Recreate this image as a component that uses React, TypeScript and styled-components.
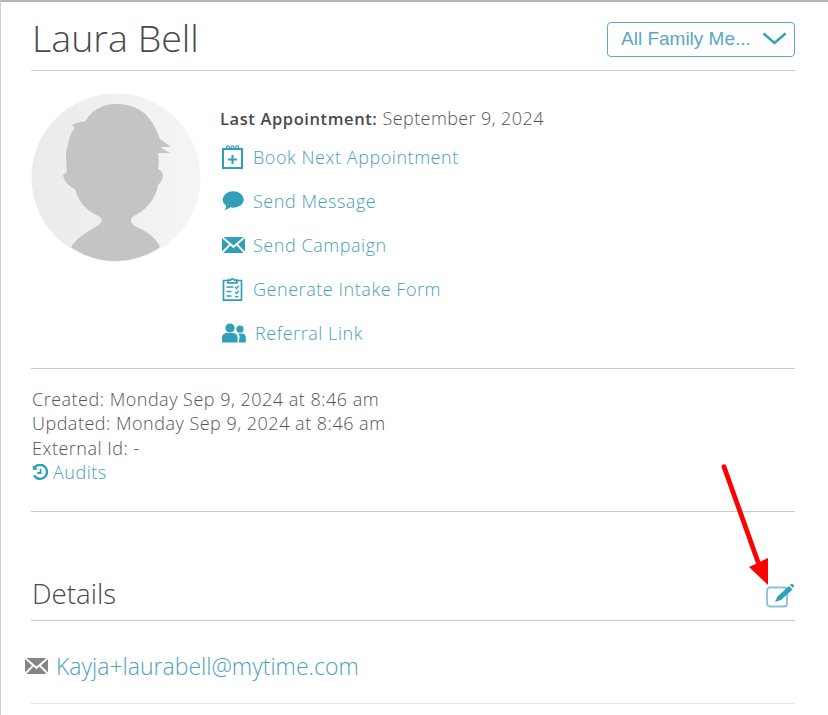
import React from "react";
import styled, { createGlobalStyle } from "styled-components";

const Global = createGlobalStyle`
  html, body { margin: 0; padding: 0; background: #fff; }
  body { font-family: "Open Sans", Lato, sans-serif; font-weight: 300; color: #555; overflow: hidden; }
  * { box-sizing: border-box; }
`;

const teal = "#2f9fba";
const linkColor = "#4ba0b7";

const Page = styled.div`
  position: relative;
  width: 828px;
  height: 715px;
  overflow: hidden;
  border-top: 2px solid #b4b4b4;
  border-left: 1px solid #cfcfcf;
  padding: 20px 33px 0 30px;
`;
const Header = styled.header`
  height: 49px;
  border-bottom: 1px solid #cccccc;
  display: flex;
  justify-content: space-between;
  align-items: flex-start;
`;
const Name = styled.h1`
  margin: -4px 0 0 1px;
  font-size: 37.6px;
  line-height: 40px;
  font-weight: 300;
  color: #4a4a4a;
`;
const Select = styled.button`
  width: 188px;
  height: 35px;
  border: 1px solid #55aec4;
  border-radius: 4px;
  background: #fff;
  display: flex;
  align-items: center;
  padding: 0 7px 2px 13px;
  justify-content: space-between;
  font-family: "Liberation Sans", Arial, sans-serif;
  font-size: 19px;
  color: #5aa8be;
`;
const Profile = styled.section`
  height: 298px;
  border-bottom: 1px solid #cccccc;
  padding-top: 22px;
  display: flex;
  gap: 19px;
`;
const Avatar = styled.svg`
  width: 170px;
  height: 169px;
  display: block;
  flex: none;
`;
const Info = styled.div`
  padding-top: 12.5px;
`;
const LastLine = styled.div`
  font-size: 18px;
  letter-spacing: 0.4px;
  line-height: 24px;
  color: #555;
  margin-bottom: 4.5px;
  b { font-weight: 600; color: #4a4a4a; font-size: 16.5px; letter-spacing: 0.6px; }
`;
const Actions = styled.ul`
  list-style: none;
  margin: 0;
  padding: 0;
`;
const Action = styled.li<{ $gap: number }>`
  height: 44px;
  display: flex;
  align-items: center;
  gap: ${(p) => p.$gap}px;
  padding-left: 2px;
  font-size: 18px;
  letter-spacing: 0.55px;
  color: ${linkColor};
  svg { flex: none; display: block; }
`;
const Meta = styled.section`
  height: 143px;
  border-bottom: 1px solid #cccccc;
  padding: 18px 0 0 1px;
  font-size: 18px;
  letter-spacing: 0.5px;
  line-height: 24.4px;
  color: #555;
`;
const Audits = styled.div`
  display: flex;
  align-items: center;
  gap: 4px;
  color: ${linkColor};
`;
const DetailsHead = styled.div`
  height: 109px;
  border-bottom: 1px solid #cccccc;
  display: flex;
  justify-content: space-between;
  align-items: flex-end;
  padding: 0 0 11px 1px;
`;
const DetailsTitle = styled.h2`
  margin: 0;
  font-size: 27.7px;
  line-height: 32px;
  font-weight: 300;
  color: #4a4a4a;
`;
const EmailRow = styled.div`
  height: 83px;
  border-bottom: 1px solid #e2e2e2;
  display: flex;
  align-items: center;
  gap: 8px;
  padding-top: 7px;
  font-size: 23px;
  color: #4aa4bb;
  svg { margin-left: -6px; }
`;
const Arrow = styled.svg`
  position: absolute;
  left: 700px;
  top: 448px;
  pointer-events: none;
`;

const Calendar = () => (
  <svg width="21" height="24" viewBox="0 0 21 24" fill="none" stroke={teal}>
    <rect x="1" y="4" width="19" height="19" strokeWidth="2" />
    <path d="M4.5 4V2.2a1.4 1.4 0 0 1 2.8 0V4M9.1 4V2.2a1.4 1.4 0 0 1 2.8 0V4M13.7 4V2.2a1.4 1.4 0 0 1 2.8 0V4" strokeWidth="1.2" />
    <path d="M10.5 10v9M6 14.5h9" strokeWidth="2" />
  </svg>
);
const Bubble = () => (
  <svg width="22" height="20" viewBox="0 0 22 20" fill={teal}>
    <ellipse cx="11.2" cy="8.5" rx="10.6" ry="8.3" />
    <path d="M4 14c.4 1.8-.4 3.6-1.6 5 2.6-.2 5-1.6 6.4-3.4z" />
  </svg>
);
const Envelope = ({ c }: { c: string }) => (
  <svg width="23" height="16" viewBox="0 0 23 16" fill={c}>
    <path d="M1.5 0h20l-10 8.6z" />
    <path d="M0 1l7 6.4L0 14.6z" />
    <path d="M23 1l-7 6.4 7 7.2z" />
    <path d="M1.4 16l7-7.4 3.1 2.6 3.1-2.6 7 7.4z" />
  </svg>
);
const Clipboard = () => (
  <svg width="21" height="24" viewBox="0 0 21 24" fill="none" stroke={teal} strokeWidth="1.7">
    <path d="M6 3.5H1.5v19.6h18V3.5H15" />
    <path d="M6 5.8V3.2h2.6a2 2 0 0 1 3.8 0H15v2.6z" />
    <path d="M4.5 10h7M4.5 14.5h5M4.5 19h5M13 10l1.6 1.5L17 8.6M13 15l1.6 1.5L17 13.6M13 19.6h3.5" strokeWidth="1.4" />
  </svg>
);
const People = () => (
  <svg width="24" height="20" viewBox="0 0 24 20" fill={teal}>
    <circle cx="8" cy="5" r="4.6" />
    <circle cx="18" cy="6.2" r="3.6" />
    <path d="M0 19v-4.5C0 11.6 2.6 10 5 10h6c2.5 0 4.6 1.8 4.6 4.5V19.5H1z" />
    <path d="M16.8 19.5H24v-5.2c0-2.2-1.6-3.9-4-3.9h-3.5c1 1.1 1.3 2.6 1.3 4.2z" transform="translate(-.2 0)" />
  </svg>
);
const History = () => (
  <svg width="17" height="17" viewBox="0 0 17 17" fill="none" stroke={teal} strokeWidth="2.4">
    <path d="M2.6 3.4A7 7 0 1 1 2 11.4" />
    <path d="M.6 1.2 1 6l5-.4z" fill={teal} stroke="none" />
    <path d="M8.6 5v4H5.4" strokeWidth="1.8" />
  </svg>
);

export default function App() {
  return (
    <>
      <Global />
      <Page>
        <Header>
          <Name>Laura Bell</Name>
          <Select>
            <span>All Family Me...</span>
            <svg width="25" height="13" viewBox="0 0 25 13" fill="none" stroke={teal} strokeWidth="2.4">
              <path d="M1.5 1.5 12.5 11 23.5 1.5" />
            </svg>
          </Select>
        </Header>
        <Profile>
          <Avatar viewBox="0 0 170 169">
            <defs>
              <linearGradient id="bg" x1="0" x2="1" y1="0" y2="0">
                <stop offset="0" stopColor="#ebebeb" />
                <stop offset="1" stopColor="#f5f5f5" />
              </linearGradient>
            </defs>
            <ellipse cx="85" cy="84.5" rx="84.5" ry="84" fill="url(#bg)" />
            <path
              fill="#c4c4c4"
              d="M40 154 C46 144 58 138 66 133 C71 130 72 128 69 124 C55 118 47 108 44 96 C38 94 33 88 32 82 L36 79 C35 70 34 60 37 52 C38 44 41 38 44 35 L41 32 C46 29 50 29 55 28 C60 17 72 11 86 11 C100 11 110 16 116 23 C122 29 126 38 129 46 L140 54 L129 54 L139 60 L127 60 C128 66 128 72 127 76 C133 78 134 86 127 92 C125 106 114 118 101 124 C99 128 100 130 104 133 C114 138 124 143 129 154 C116 163 100 168 85 168 C68 168 53 163 40 154 Z"
            />
          </Avatar>
          <Info>
            <LastLine>
              <b>Last Appointment:</b> September 9, 2024
            </LastLine>
            <Actions>
              <Action $gap={10}><Calendar />Book Next Appointment</Action>
              <Action $gap={9}><Bubble />Send Message</Action>
              <Action $gap={8}><Envelope c={teal} />Send Campaign</Action>
              <Action $gap={10}><Clipboard />Generate Intake Form</Action>
              <Action $gap={9}><People />Referral Link</Action>
            </Actions>
          </Info>
        </Profile>
        <Meta>
          <div>Created: Monday Sep 9, 2024 at 8:46 am</div>
          <div>Updated: Monday Sep 9, 2024 at 8:46 am</div>
          <div>External Id: -</div>
          <Audits><History />Audits</Audits>
        </Meta>
        <DetailsHead>
          <DetailsTitle>Details</DetailsTitle>
          <svg width="30" height="26" viewBox="0 0 30 26" fill="none">
            <rect x="2" y="4.5" width="20" height="19" rx="3" stroke="#84c4d4" strokeWidth="1.8" />
            <path d="M10 19 12.5 13.5 24 3l3.5 3.4L16 17z" fill={teal} />
            <path d="M25 2l1-1a1.2 1.2 0 0 1 1.6 0l1.2 1.2a1.2 1.2 0 0 1 0 1.6l-1 1z" fill={teal} />
          </svg>
        </DetailsHead>
        <EmailRow>
          <Envelope c="#858585" />
          <span>Kayja+laurabell@mytime.com</span>
        </EmailRow>
        <Arrow width="80" height="150" viewBox="0 0 80 150">
          <path d="M23 16.7 57 112" stroke="#ff0000" strokeWidth="4.8" strokeLinecap="round" fill="none" />
          <path d="M48 117 67 108 67 135z" fill="#ff0000" />
        </Arrow>
      </Page>
    </>
  );
}
